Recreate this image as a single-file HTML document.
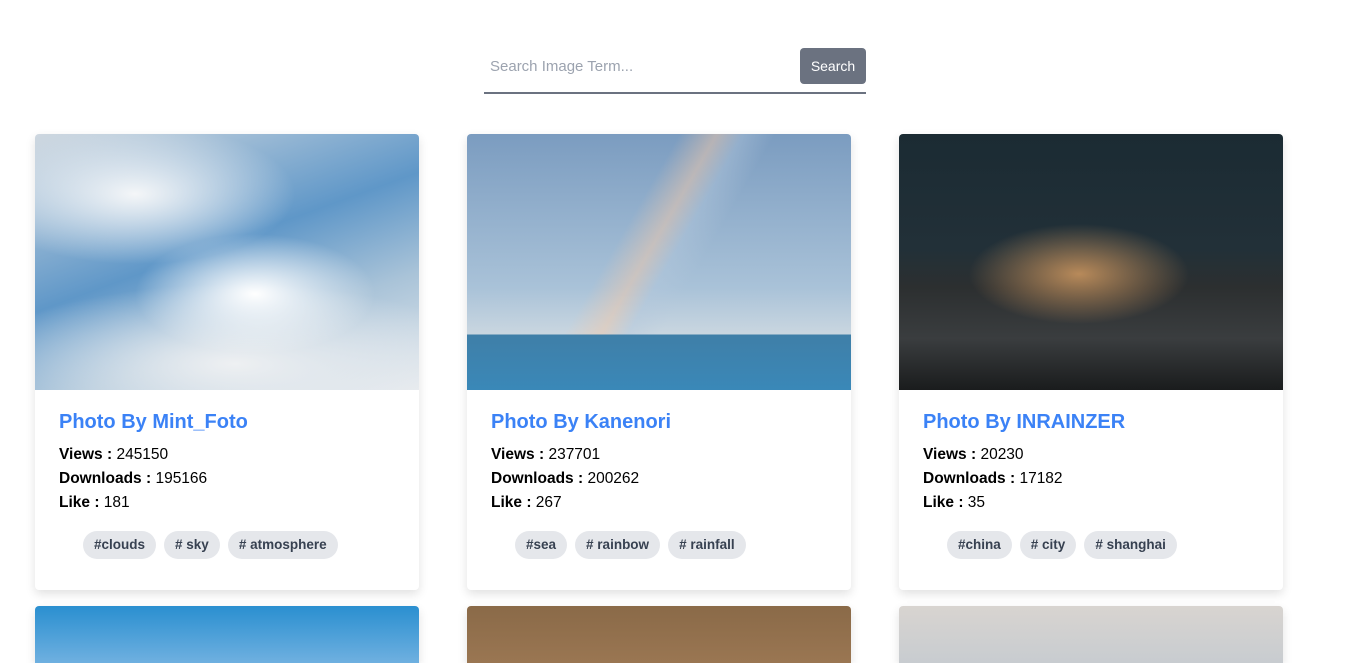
<!DOCTYPE html>
<html><head><meta charset="utf-8"><style>
*{box-sizing:border-box;margin:0;padding:0}
html,body{width:1352px;height:663px;overflow:hidden}
body{background:#fff;font-family:"Segoe UI","Liberation Sans",sans-serif;position:relative}
.search{position:absolute;left:484px;top:48px;width:382px;height:46px;border-bottom:2px solid #6b7280}
.search span{position:absolute;left:6px;top:10px;font-size:15px;color:#9ca3af}
.search b{position:absolute;right:0;top:0;width:66px;height:36px;background:#6b7280;color:#fff;font-weight:normal;font-size:14px;border-radius:4px;text-align:center;line-height:36px}
.card{position:absolute;width:384px;border-radius:4px;overflow:hidden;background:#fff;box-shadow:0 4px 10px rgba(0,0,0,.12)}
.img{height:256px}
.body{padding:17px 24px 0}
h2{font-size:20px;color:#3b82f6;font-weight:bold;line-height:30px;margin-bottom:6px}
p{font-size:15.5px;line-height:24px;color:#000}
.tags{padding:16px 0 31px 48px;display:flex;gap:8px}
.tags span{background:#e5e7eb;color:#374151;font-size:13.5px;font-weight:600;border-radius:14px;height:28px;line-height:28px;padding:0 11px}
.bot{height:57px;border-radius:4px 4px 0 0}
</style></head><body>
<div class="search"><span>Search Image Term...</span><b>Search</b></div>

<div class="card" style="left:35px;top:134px"><div class="img" style="background:radial-gradient(ellipse 120px 60px at 220px 160px,#fff,rgba(255,255,255,0) 100%),radial-gradient(ellipse 160px 70px at 100px 60px,#f4f6f8,rgba(255,255,255,0)),radial-gradient(ellipse 260px 80px at 200px 230px,#eef0f2,rgba(255,255,255,0)),linear-gradient(160deg,#cfd8e0 0%,#5f97c8 45%,#a9c3d8 70%,#e6eaee 100%)"></div>
<div class="body"><h2>Photo By Mint_Foto</h2><p><b>Views :</b> 245150</p><p><b>Downloads :</b> 195166</p><p><b>Like :</b> 181</p></div>
<div class="tags"><span>#clouds</span><span># sky</span><span># atmosphere</span></div></div>

<div class="card" style="left:467px;top:134px"><div class="img" style="background:linear-gradient(180deg,rgba(0,0,0,0) 0,rgba(0,0,0,0) 200px,#3f7fa8 201px,#3a88b8 256px),linear-gradient(120deg,rgba(0,0,0,0) 40%,rgba(240,200,170,.5) 47%,rgba(180,200,220,.4) 52%,rgba(0,0,0,0) 58%),linear-gradient(180deg,#7b9cc0 0%,#a9c2d8 60%,#c9d6e0 78%)"></div>
<div class="body"><h2>Photo By Kanenori</h2><p><b>Views :</b> 237701</p><p><b>Downloads :</b> 200262</p><p><b>Like :</b> 267</p></div>
<div class="tags"><span>#sea</span><span># rainbow</span><span># rainfall</span></div></div>

<div class="card" style="left:899px;top:134px"><div class="img" style="background:radial-gradient(ellipse 110px 50px at 180px 140px,#b88a5a,rgba(0,0,0,0)),linear-gradient(180deg,#1b2b33 0%,#223038 45%,#2c2f30 60%,#3a3d3f 80%,#1a1c1d 100%)"></div>
<div class="body"><h2>Photo By INRAINZER</h2><p><b>Views :</b> 20230</p><p><b>Downloads :</b> 17182</p><p><b>Like :</b> 35</p></div>
<div class="tags"><span>#china</span><span># city</span><span># shanghai</span></div></div>

<div class="card bot" style="left:35px;top:606px;background:linear-gradient(180deg,#2a8fd0,#6fb0e0)"></div>
<div class="card bot" style="left:467px;top:606px;background:linear-gradient(180deg,#8a6a48,#9a7652)"></div>
<div class="card bot" style="left:899px;top:606px;background:linear-gradient(180deg,#d8d4d0,#c8ccd0)"></div>
</body></html>
